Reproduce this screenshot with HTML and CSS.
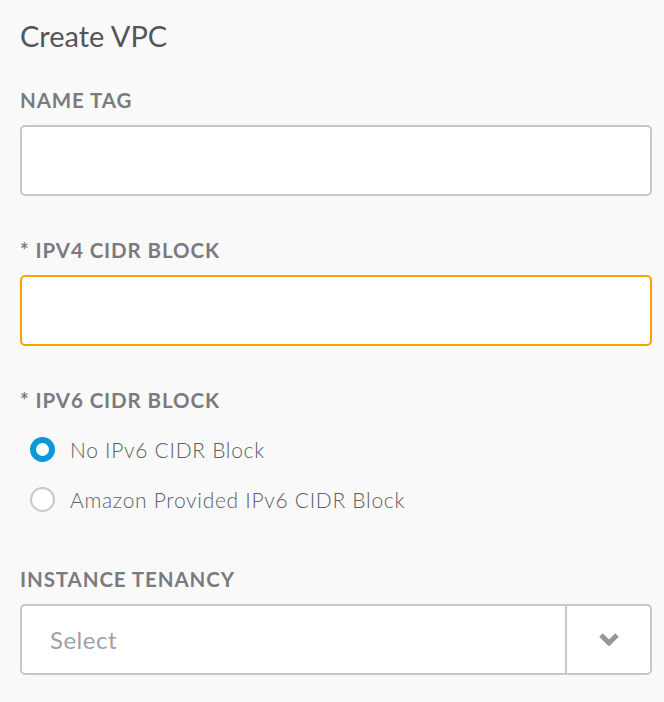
FILE: index.html
```html
<!DOCTYPE html>
<html>
<head>
<meta charset="utf-8">
<link rel="stylesheet" href="styles.css">
</head>
<body>
<div class="page">
  <h1 class="title">Create VPC</h1>
  <div class="field">
    <div class="label">NAME TAG</div>
    <div class="input"></div>
  </div>
  <div class="field">
    <div class="label">* IPV4 CIDR BLOCK</div>
    <div class="input focused"></div>
  </div>
  <div class="field">
    <div class="label">* IPV6 CIDR BLOCK</div>
    <div class="radios">
      <div class="radio-row"><span class="radio checked"></span><span class="radio-text">No IPv6 CIDR Block</span></div>
      <div class="radio-row"><span class="radio"></span><span class="radio-text">Amazon Provided IPv6 CIDR Block</span></div>
    </div>
  </div>
  <div class="field">
    <div class="label">INSTANCE TENANCY</div>
    <div class="select">
      <div class="select-value">Select</div>
      <div class="select-arrow">
        <svg width="22" height="14" viewBox="0 0 22 14"><polyline points="3,3 11,11 19,3" fill="none" stroke="#97969b" stroke-width="5"/></svg>
      </div>
    </div>
  </div>
</div>
</body>
</html>
```
FILE: styles.css
```css
html, body {
  margin: 0;
  padding: 0;
  background: #f9f9f9;
}
body {
  font-family: Lato, "Open Sans", sans-serif;
}
.page {
  padding: 18px 12px 0 20px;
}
.title {
  margin: 0 0 34px 0;
  font-size: 29px;
  line-height: 36px;
  font-weight: 400;
  color: #555559;
}
.field {
  margin-bottom: 42.5px;
}
.label {
  font-size: 20.5px;
  line-height: 24px;
  font-weight: 700;
  color: #7b7a80;
  letter-spacing: 0.9px;
  margin-bottom: 12.5px;
}
.input {
  box-sizing: border-box;
  height: 71px;
  border: 2px solid #c8c7cc;
  border-radius: 5px;
  background: #fff;
}
.input.focused {
  border-color: #f7a200;
}
.radios {
  display: flex;
  flex-direction: column;
}
.radio-row {
  display: flex;
  align-items: center;
  height: 50px;
  padding-left: 10px;
}
.radio {
  box-sizing: border-box;
  width: 25px;
  height: 25px;
  border-radius: 50%;
  border: 2px solid #c8c7cc;
  background: #fff;
  margin-right: 15px;
}
.radio.checked {
  border: 6px solid #0a98d8;
}
.radio-text {
  font-size: 21px;
  font-weight: 300;
  color: #5f5f63;
  letter-spacing: 0.7px;
}
.select {
  box-sizing: border-box;
  height: 71px;
  border: 2px solid #c8c7cc;
  border-radius: 5px;
  background: #fff;
  display: flex;
}
.select-value {
  flex: 1;
  display: flex;
  align-items: center;
  padding-left: 28px;
  font-size: 24px;
  letter-spacing: 0.5px;
  color: #a1a0a5;
}
.select-arrow {
  width: 83px;
  border-left: 2px solid #c8c7cc;
  display: flex;
  align-items: center;
  justify-content: center;
}
```
